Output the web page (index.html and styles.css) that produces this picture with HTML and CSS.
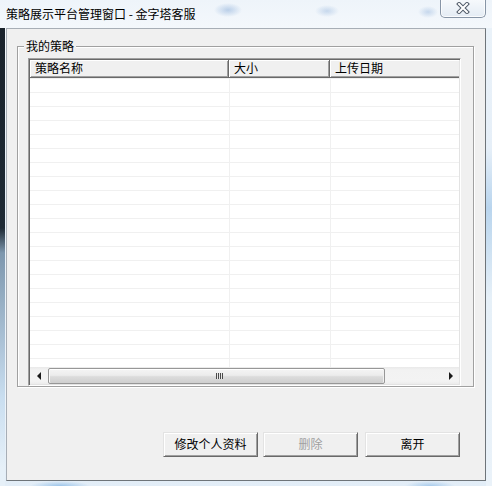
FILE: index.html
```html
<!DOCTYPE html>
<html lang="zh">
<head>
<meta charset="utf-8">
<title>策略展示平台管理窗口</title>
<link rel="stylesheet" href="styles.css">
</head>
<body>
<div class="frame">
  <div class="titlebar">
    <div class="title">策略展示平台管理窗口 - 金字塔客服</div>
    <div class="close">
      <svg width="14" height="12" viewBox="0 0 14 12">
        <path d="M3 2 L11 10 M11 2 L3 10" stroke="#4f5a68" stroke-width="4" stroke-linecap="square" fill="none"/>
        <path d="M3 2 L11 10 M11 2 L3 10" stroke="#ffffff" stroke-width="2" stroke-linecap="square" fill="none"/>
      </svg>
    </div>
  </div>
  <div class="main">
    <div class="edge-left"></div>
    <div class="client">
      <div class="group">
        <div class="legend">我的策略</div>
        <div class="listview">
          <div class="header">
            <div class="hcell c1">策略名称</div>
            <div class="hcell c2">大小</div>
            <div class="hcell c3">上传日期</div>
          </div>
          <div class="rows">
            <div class="col c1"></div>
            <div class="col c2"></div>
            <div class="col c3"></div>
          </div>
          <div class="hscroll">
            <div class="arrow"><span class="tri-left"></span></div>
            <div class="track">
              <div class="thumb"><span class="grip"></span></div>
            </div>
            <div class="arrow"><span class="tri-right"></span></div>
          </div>
        </div>
      </div>
      <div class="buttons">
        <div class="btn">修改个人资料</div>
        <div class="btn disabled">删除</div>
        <div class="btn wide-gap">离开</div>
      </div>
    </div>
    <div class="edge-right"></div>
  </div>
</div>
</body>
</html>
```

FILE: styles.css
```css
html, body {
  margin: 0;
  padding: 0;
}
body {
  font-family: "Noto Sans CJK SC", "Liberation Sans", sans-serif;
  font-size: 12px;
  color: #000;
  background: #e8f0f8;
}
.frame {
  width: 492px;
  height: 486px;
  overflow: hidden;
  background-color: #eaf2f9;
  background-image:
    radial-gradient(ellipse 14px 7px at 228px 10px, rgba(120,160,210,0.45), rgba(120,160,210,0)),
    radial-gradient(ellipse 12px 6px at 327px 11px, rgba(120,160,210,0.35), rgba(120,160,210,0)),
    radial-gradient(ellipse 10px 6px at 428px 12px, rgba(120,160,210,0.35), rgba(120,160,210,0)),
    radial-gradient(ellipse 30px 5px at 60px 486px, rgba(110,170,225,0.6), rgba(110,170,225,0)),
    radial-gradient(ellipse 25px 5px at 430px 486px, rgba(110,170,225,0.5), rgba(110,170,225,0)),
    linear-gradient(to bottom, #eef4fa, #f4f8fc 30px, #e7f0f8 200px, #eef4fa 400px, #e2edf7);
}
.titlebar {
  height: 28px;
  display: flex;
  align-items: flex-start;
}
.tb-edge {
  width: 5px;
}
.title {
  padding: 7px 0 0 6px;
  font-size: 12px;
  line-height: 14px;
  color: #000;
  white-space: nowrap;
}
.close {
  margin-left: auto;
  margin-right: 6px;
  width: 46px;
  height: 18px;
  box-sizing: border-box;
  border: 1px solid #8795a6;
  border-top: none;
  border-radius: 0 0 5px 5px;
  background: linear-gradient(to bottom, #f6f9fc, #e4ecf4);
  box-shadow: inset 0 -1px 0 rgba(255,255,255,0.8), inset 1px 0 0 rgba(255,255,255,0.7), inset -1px 0 0 rgba(255,255,255,0.7);
  display: flex;
  align-items: center;
  justify-content: center;
}
.close svg {
  display: block;
  margin-top: -1px;
}
.main {
  display: flex;
  align-items: flex-start;
}
.edge-left {
  width: 5px;
  height: 458px;
  margin-right: 1px;
  flex: none;
  background-color: #1b242d;
  background-image: linear-gradient(to bottom, #1a232c 0px, #1e2a35 200px, #7d97ae 225px, #c9def0 370px, #e6f0f8 440px);
}
.edge-right {
  width: 6px;
  height: 458px;
  flex: none;
  background-color: #e6eff8;
  background-image: linear-gradient(to bottom, #eaf2f9 0px, #e6eff8 120px, #b9d5ee 180px, #c5dcf0 205px, #e6f0f8 270px, #eaf2f9 458px);
}
.client {
  width: 480px;
  height: 453px;
  flex: none;
  box-sizing: border-box;
  background: #f0f0f0;
  border: 1px solid;
  border-color: #a7aeb6 #6e7479 #6e7479 #a7aeb6;
  display: flex;
  flex-direction: column;
  align-items: flex-start;
}
.group {
  margin: 17px 0 0 10px;
  width: 457px;
  height: 341px;
  box-sizing: border-box;
  border: 1px solid #a0a0a0;
  box-shadow: inset 1px 1px 0 #fff, 1px 1px 0 #fff;
  padding: 0 0 0 10px;
}
.legend {
  margin: -8px 0 0 -4px;
  padding: 0 2px;
  width: fit-content;
  line-height: 14px;
  height: 14px;
  background: #f0f0f0;
}
.listview {
  margin-top: 5px;
  width: 433px;
  height: 328px;
  box-sizing: border-box;
  border: 1px solid;
  border-color: #a0a0a0 #ffffff #ffffff #a0a0a0;
  padding: 1px;
  box-shadow: inset 1px 1px 0 #696969, inset -1px -1px 0 #e3e3e3;
  display: flex;
  flex-direction: column;
  overflow: hidden;
}
.header {
  height: 18px;
  display: flex;
  flex: none;
  overflow: hidden;
}
.hcell {
  height: 18px;
  box-sizing: border-box;
  background: #f0f0f0;
  border-right: 1px solid #696969;
  border-bottom: 1px solid #696969;
  box-shadow: inset 1px 1px 0 #fff, inset -1px -1px 0 #a0a0a0;
  padding-left: 5px;
  line-height: 16px;
  white-space: nowrap;
  flex: none;
}
.hcell.c1 { width: 199px; }
.hcell.c2 { width: 101px; }
.hcell.c3 { width: 160px; }
.rows {
  flex: 1;
  display: flex;
  background: repeating-linear-gradient(to bottom, #f0f0f0 0, #f0f0f0 1px, #ffffff 1px, #ffffff 14px);
}
.col {
  flex: none;
  box-sizing: border-box;
}
.col.c1 { width: 200px; border-right: 1px solid #f0f0f0; }
.col.c2 { width: 101px; border-right: 1px solid #f0f0f0; }
.col.c3 { flex: 1; }
.hscroll {
  height: 17px;
  flex: none;
  display: flex;
  background: linear-gradient(to bottom, #e9e9e9, #f2f2f2 3px, #f3f3f3 14px, #ececec);
}
.arrow {
  width: 17px;
  height: 17px;
  flex: none;
  display: flex;
  align-items: center;
  justify-content: center;
}
.tri-left {
  width: 0;
  height: 0;
  border-top: 4px solid transparent;
  border-bottom: 4px solid transparent;
  border-right: 4px solid #1a1a1a;
}
.tri-right {
  width: 0;
  height: 0;
  border-top: 4px solid transparent;
  border-bottom: 4px solid transparent;
  border-left: 4px solid #1a1a1a;
}
.track {
  flex: 1;
  display: flex;
  align-items: center;
}
.thumb {
  margin-left: 1px;
  width: 337px;
  height: 16px;
  box-sizing: border-box;
  border: 1px solid #979797;
  border-radius: 2px;
  background: linear-gradient(to bottom, #f5f5f5, #ececec 45%, #dcdcdc 55%, #cfcfcf);
  box-shadow: inset 0 1px 0 #fff, inset 1px 0 0 #fafafa, inset -1px 0 0 #f0f0f0;
  display: flex;
  align-items: center;
  justify-content: center;
}
.grip {
  display: block;
  width: 7px;
  height: 6px;
  margin-left: 5px;
  background: repeating-linear-gradient(to right, #4a4a4a 0, #4a4a4a 1px, #e8e8e8 1px, #e8e8e8 2px);
}
.buttons {
  margin: 45px 0 0 156px;
  display: flex;
  gap: 5px;
}
.btn {
  width: 95px;
  height: 25px;
  box-sizing: border-box;
  border: 1px solid;
  border-color: #e3e3e3 #696969 #696969 #e3e3e3;
  box-shadow: inset 1px 1px 0 #ffffff, inset -1px -1px 0 #a0a0a0;
  background: #f0f0f0;
  text-align: center;
  line-height: 22px;
  white-space: nowrap;
}
.btn.disabled {
  color: #a0a0a0;
}
.btn.wide-gap {
  margin-left: 2px;
}
```
